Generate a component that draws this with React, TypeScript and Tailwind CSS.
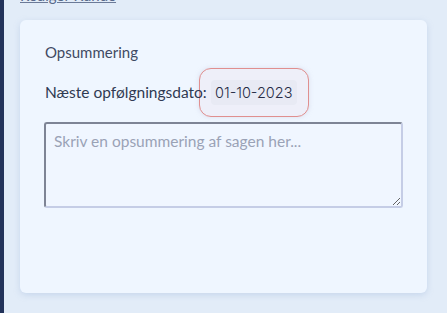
export default function App() {
  return (
    <div className="flex h-[313px] w-[447px] overflow-hidden bg-[#e2ecf8] font-['Lato',sans-serif]">
      <div className="w-[4px] shrink-0 bg-[#22335a]" />
      <div className="flex flex-1 flex-col px-4">
        <a className="-mt-[12px] h-[16px] text-[15px] leading-[14px] text-[#58698a] underline decoration-[#6b7a98]">
          Rediger Kunde
        </a>
        <div className="mt-[16px] h-[273px] w-[407px] shrink-0 rounded-[6px] bg-[#eff6ff] px-[25px] pt-[23px] shadow-[0_2px_6px_rgba(150,175,215,0.35)]">
          <p className="text-[15px] leading-[18px] text-[#3f4a63]">Opsummering</p>
          <div className="mt-[7px] flex items-center">
            <span className="relative z-10 text-[15.5px] text-[#2f3a52]">Næste opfølgningsdato:</span>
            <div className="-ml-[8px] flex h-[49px] w-[110px] items-center justify-center rounded-[12px] border border-[#e08f8f] bg-[#eeeff9] shadow-[0_0_4px_rgba(200,200,220,0.5)]">
              <span className="rounded-[4px] bg-[#e8eaf4] px-[4px] py-[3px] font-['Inter',sans-serif] text-[14.5px] font-light leading-[19px] text-[#262b45]">
                01-10-2023
              </span>
            </div>
          </div>
          <textarea
            className="mt-[5px] h-[86px] w-[359px] -ml-[1px] resize-y rounded-[3px] border-2 border-[#c5cde6] border-t-[#7e8495] border-l-[#7e8495] bg-[#f0f6ff] px-[8px] py-[6px] text-[15.5px] text-[#2f3a52] outline-none placeholder:text-[#9aa2b6]"
            placeholder="Skriv en opsummering af sagen her..."
          />
        </div>
      </div>
    </div>
  );
}
